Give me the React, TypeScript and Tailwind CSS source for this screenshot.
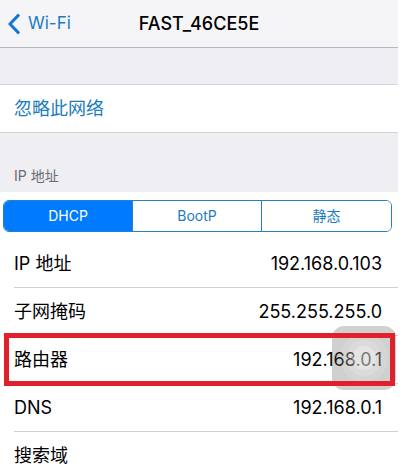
import { useState } from "react";

interface RowProps {
  label: string;
  value?: string;
  last?: boolean;
}

const modes = ["DHCP", "BootP", "静态"];

function Row({ label, value, last }: RowProps) {
  return (
    <div className={`ml-3.5 flex h-12 items-center justify-between pr-4 text-lg text-black ${last ? "" : "border-b border-[#d2d2d5]"}`}>
      <dt>{label}</dt>
      <dd>{value}</dd>
    </div>
  );
}

function AssistiveTouch() {
  return (
    <button
      type="button"
      aria-label="AssistiveTouch"
      className="absolute -top-2.5 right-0.5 flex size-16 items-center justify-center rounded-xl bg-[#505050]/27"
    >
      <span className="flex size-12 items-center justify-center rounded-full bg-white/10">
        <span className="flex size-9 items-center justify-center rounded-full bg-white/15">
          <span className="size-6 rounded-full bg-white/25" />
        </span>
      </span>
    </button>
  );
}

export default function App() {
  const [mode, setMode] = useState("DHCP");

  return (
    <div className="bg-white pr-2.5 font-['Inter','Noto_Sans_CJK_SC',sans-serif]">
      <header className="grid h-12 grid-cols-[1fr_auto_1fr] items-center border-b border-[#b9b9be] bg-[#f5f5f8]">
        <a href="#wifi" className="flex items-center gap-2 pl-2 text-[17px] text-[#1b7cc0]">
          <svg viewBox="0 0 12 22" className="h-[22px] w-3" fill="none" stroke="#1476d8" strokeWidth="3">
            <path d="M11 1.5 L2 11 L11 20.5" />
          </svg>
          Wi-Fi
        </a>
        <h1 className="text-lg font-medium text-black">FAST_46CE5E</h1>
      </header>

      <main>
        <div className="h-[37px] border-b border-[#d2d2d7] bg-[#eeeef3]" />
        <button type="button" className="flex h-[47px] w-full items-center pl-3.5 text-lg text-[#1b7cc0]">
          忽略此网络
        </button>

        <h2 className="flex h-[60px] items-end border-t border-[#d2d2d7] bg-[#eeeef3] pb-1.5 pl-3.5 text-sm text-[#6b6b70]">
          IP 地址
        </h2>

        <div className="pt-2 pr-1.5 pb-2 pl-[3px]">
          <div className="grid h-8 grid-cols-3 divide-x divide-[#2a80bc] overflow-hidden rounded-md border border-[#2a80bc] text-sm">
            {modes.map((name) => (
              <button
                key={name}
                type="button"
                aria-pressed={mode === name}
                onClick={() => setMode(name)}
                className={mode === name ? "bg-[#007aff] text-white" : "bg-white text-[#1b7cc0]"}
              >
                {name}
              </button>
            ))}
          </div>
        </div>

        <dl>
          <Row label="IP 地址" value="192.168.0.103" />
          <Row label="子网掩码" value="255.255.255.0" />
          <div className="relative">
            <Row label="路由器" value="192.168.0.1" />
            <AssistiveTouch />
            <div className="pointer-events-none absolute -top-[3px] right-[3px] -bottom-0.5 left-1 border-5 border-[#e0202a]" />
          </div>
          <Row label="DNS" value="192.168.0.1" />
          <Row label="搜索域" last />
        </dl>
      </main>
    </div>
  );
}
